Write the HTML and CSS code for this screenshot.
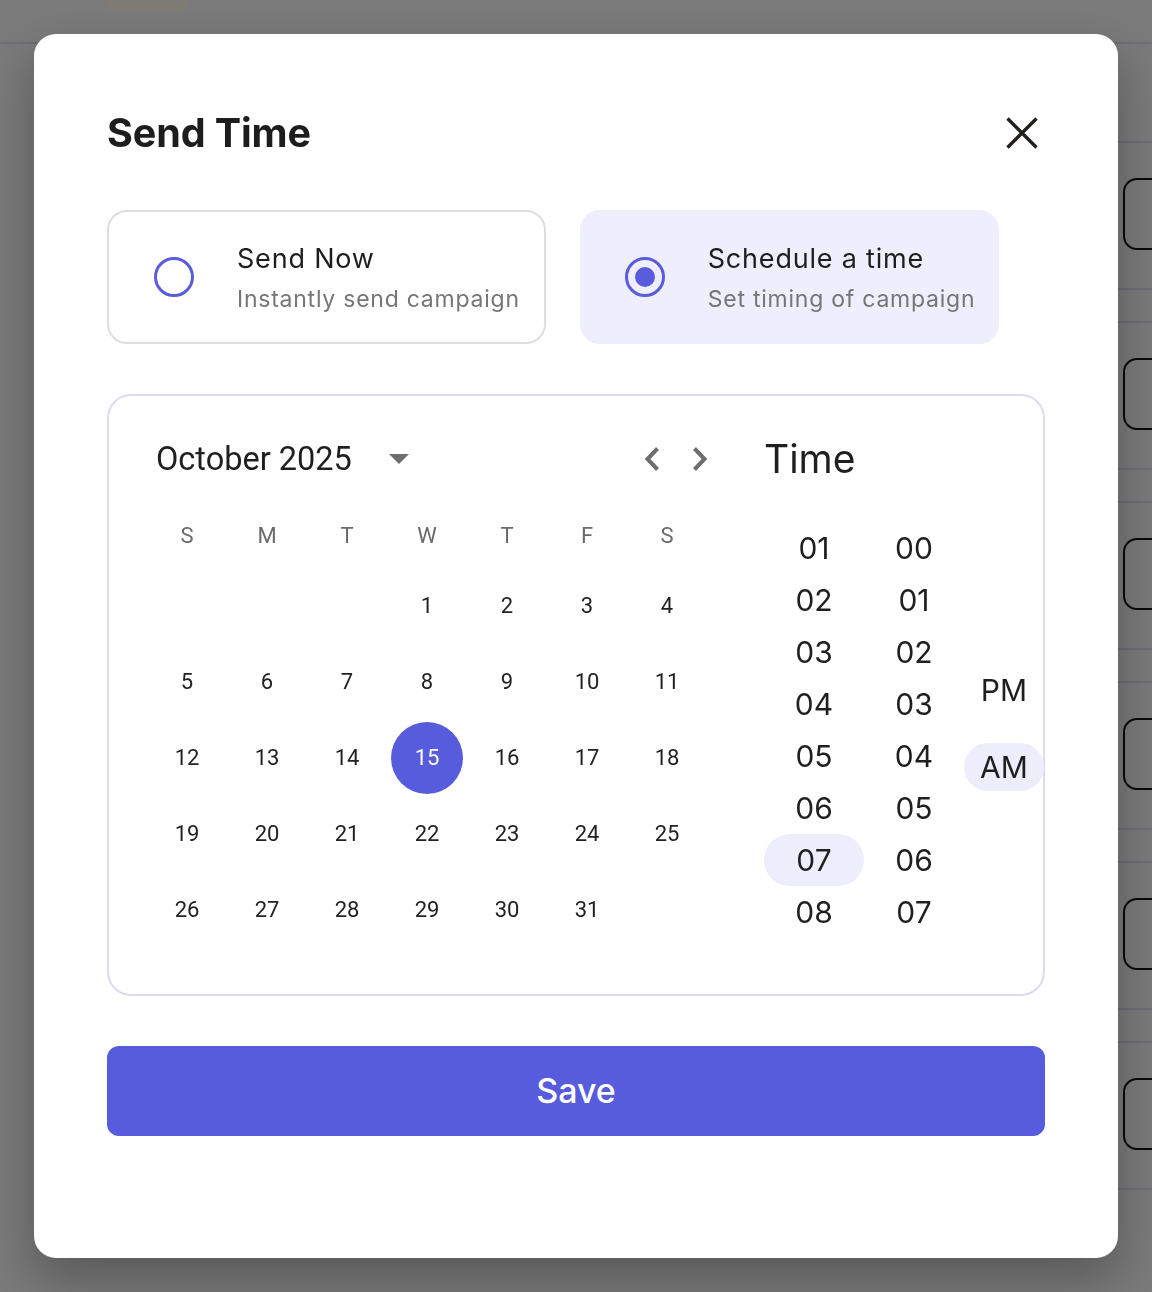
FILE: index.html
```html
<!DOCTYPE html>
<html lang="en">
<head>
<meta charset="utf-8">
<title>Send Time</title>
<link rel="stylesheet" href="styles.css">
</head>
<body>
<div class="page">
  <header class="topbar">
    <span class="topbar-pill"></span>
  </header>
  <main class="list">
    <div class="list-row"><div class="row-inner"><span class="row-box"></span></div></div>
    <div class="list-row"><div class="row-inner"><span class="row-box"></span></div></div>
    <div class="list-row"><div class="row-inner"><span class="row-box"></span></div></div>
    <div class="list-row"><div class="row-inner"><span class="row-box"></span></div></div>
    <div class="list-row"><div class="row-inner"><span class="row-box"></span></div></div>
    <div class="list-row"><div class="row-inner"><span class="row-box"></span></div></div>
  </main>
</div>

<div class="overlay">
  <section class="dialog" role="dialog" aria-label="Send Time">
    <div class="dialog-header">
      <h1 class="dialog-title">Send Time</h1>
      <button class="close-btn" aria-label="Close">
        <svg width="32" height="32" viewBox="0 0 32 32"><path d="M1.5 1.5 L30.5 30.5 M30.5 1.5 L1.5 30.5" stroke="#231f1c" stroke-width="3.4" fill="none" stroke-linecap="butt"/></svg>
      </button>
    </div>

    <div class="options">
      <label class="option">
        <span class="radio"></span>
        <span class="option-text">
          <span class="option-title">Send Now</span>
          <span class="option-sub">Instantly send campaign</span>
        </span>
      </label>
      <label class="option option-active">
        <span class="radio radio-checked"><span class="radio-dot"></span></span>
        <span class="option-text">
          <span class="option-title">Schedule a time</span>
          <span class="option-sub">Set timing of campaign</span>
        </span>
      </label>
    </div>

    <div class="picker">
      <div class="calendar">
        <div class="cal-header">
          <div class="cal-month">
            <span class="cal-month-label">October 2025</span>
            <svg class="cal-caret" width="20" height="10" viewBox="0 0 20 10"><path d="M0 0 H20 L10 10 Z" fill="#6e6e6e"/></svg>
          </div>
          <div class="cal-nav">
            <button class="nav-btn" aria-label="Previous month">
              <svg width="16" height="24" viewBox="0 0 16 24"><path d="M13.5 1.5 L3.5 12 L13.5 22.5" stroke="#6e6e6e" stroke-width="4" fill="none"/></svg>
            </button>
            <button class="nav-btn" aria-label="Next month">
              <svg width="16" height="24" viewBox="0 0 16 24"><path d="M2.5 1.5 L12.5 12 L2.5 22.5" stroke="#6e6e6e" stroke-width="4" fill="none"/></svg>
            </button>
          </div>
        </div>
        <div class="weekdays">
          <span>S</span><span>M</span><span>T</span><span>W</span><span>T</span><span>F</span><span>S</span>
        </div>
        <div class="days">
          <span></span><span></span><span></span>
          <span class="day">1</span><span class="day">2</span><span class="day">3</span><span class="day">4</span>
          <span class="day">5</span><span class="day">6</span><span class="day">7</span><span class="day">8</span><span class="day">9</span><span class="day">10</span><span class="day">11</span>
          <span class="day">12</span><span class="day">13</span><span class="day">14</span><span class="day"><span class="day-selected">15</span></span><span class="day">16</span><span class="day">17</span><span class="day">18</span>
          <span class="day">19</span><span class="day">20</span><span class="day">21</span><span class="day">22</span><span class="day">23</span><span class="day">24</span><span class="day">25</span>
          <span class="day">26</span><span class="day">27</span><span class="day">28</span><span class="day">29</span><span class="day">30</span><span class="day">31</span>
        </div>
      </div>

      <div class="time">
        <div class="time-title">Time</div>
        <div class="time-cols">
          <ul class="time-col">
            <li>01</li><li>02</li><li>03</li><li>04</li><li>05</li><li>06</li><li class="time-sel">07</li><li>08</li>
          </ul>
          <ul class="time-col">
            <li>00</li><li>01</li><li>02</li><li>03</li><li>04</li><li>05</li><li>06</li><li>07</li>
          </ul>
          <ul class="time-col ampm">
            <li>PM</li><li class="time-sel">AM</li>
          </ul>
        </div>
      </div>
    </div>

    <button class="save-btn">Save</button>
  </section>
</div>
</body>
</html>
```

FILE: styles.css
```css
* { box-sizing: border-box; }

html, body {
  margin: 0;
  padding: 0;
  width: 1152px;
  height: 1292px;
  overflow: hidden;
}

body {
  font-family: "Inter", "Noto Sans", sans-serif;
  background: #f4f4f4;
}

/* ---------- background page ---------- */
.page {
  width: 1152px;
  height: 1292px;
}

.topbar {
  height: 44px;
  border-bottom: 2px solid #dadae4;
  padding-left: 105px;
}

.topbar-pill {
  display: block;
  width: 85px;
  height: 12px;
  background: #fdf5e8;
  border-radius: 0 0 14px 14px;
}

.list {
  margin-top: 97px;
  margin-left: 60px;
  border-top: 2px solid #dadae4;
}

.list-row {
  height: 180px;
  border-bottom: 2px solid #dadae4;
}

.list-row:last-child {
  border-bottom: 0;
}

.row-inner {
  height: 147px;
  border-bottom: 2px solid #dadae4;
  padding-top: 35px;
  display: flex;
  justify-content: flex-end;
}

.row-box {
  display: block;
  width: 80px;
  height: 72px;
  margin-right: -51px;
  border: 2px solid #111;
  border-radius: 14px;
}

/* ---------- overlay / dialog ---------- */
.overlay {
  position: fixed;
  inset: 0;
  background: rgba(0, 0, 0, 0.5);
  display: flex;
  align-items: center;
  justify-content: center;
}

.dialog {
  width: 1084px;
  height: 1224px;
  margin-top: -1px;
  background: #fff;
  border-radius: 22px;
  padding: 75px 73px 0 73px;
  box-shadow: 0 22px 50px rgba(0, 0, 0, 0.28);
  display: flex;
  flex-direction: column;
}

.dialog-header {
  height: 48px;
  display: flex;
  align-items: center;
  justify-content: space-between;
}

.dialog-title {
  margin: 0;
  font-size: 39.5px;
  font-weight: 700;
  color: #1d1d1d;
  letter-spacing: -0.1px;
}

.close-btn {
  width: 48px;
  height: 48px;
  margin-right: -1px;
  border: 0;
  padding: 0;
  background: transparent;
  display: flex;
  align-items: center;
  justify-content: center;
}

/* ---------- options ---------- */
.options {
  margin-top: 53px;
  display: flex;
  gap: 34px;
}

.option {
  height: 134px;
  display: flex;
  align-items: center;
  gap: 43px;
  padding: 0 24px 0 45px;
  border: 2px solid #dedede;
  border-radius: 20px;
}

.option-active {
  background: #eeeefc;
  border-color: #eeeefc;
  padding: 0 22px 0 43px;
}

.radio {
  width: 40px;
  height: 40px;
  border: 3px solid #5a5cdb;
  border-radius: 50%;
  display: flex;
  align-items: center;
  justify-content: center;
  flex-shrink: 0;
}

.radio-dot {
  width: 20px;
  height: 20px;
  border-radius: 50%;
  background: #5a5cdb;
}

.option-text {
  display: flex;
  flex-direction: column;
  padding-top: 4px;
}

.option-title {
  font-size: 27px;
  line-height: 38px;
  color: #1e1e1e;
  letter-spacing: 0.8px;
}

.option-sub {
  font-size: 23px;
  line-height: 38px;
  margin-top: 2px;
  color: #767676;
  letter-spacing: 0.76px;
}

/* ---------- picker ---------- */
.picker {
  margin-top: 50px;
  height: 602px;
  border: 2px solid #dddcee;
  border-radius: 24px;
  padding: 38px 0 0 38px;
  display: flex;
}

.calendar {
  width: 560px;
  font-family: "Roboto", "Liberation Sans", sans-serif;
}

.cal-header {
  height: 50px;
  display: flex;
  align-items: center;
  justify-content: space-between;
  padding-left: 9px;
}

.cal-month {
  display: flex;
  align-items: center;
  gap: 37px;
}

.cal-month-label {
  font-size: 32.5px;
  color: #1f1f1f;
}

.cal-caret {
  margin-top: 1px;
}

.cal-nav {
  display: flex;
  gap: 32px;
  margin-right: -1px;
}

.nav-btn {
  width: 16px;
  height: 24px;
  border: 0;
  padding: 0;
  background: transparent;
  display: flex;
}

.weekdays {
  margin-top: 20px;
  height: 64px;
  display: grid;
  grid-template-columns: repeat(7, 80px);
  align-items: center;
  justify-items: center;
  font-size: 22px;
  color: #6a6a6a;
}

.days {
  display: grid;
  grid-template-columns: repeat(7, 80px);
  grid-auto-rows: 76px;
  font-size: 22px;
  color: #222;
}

.day {
  display: flex;
  align-items: center;
  justify-content: center;
}

.day-selected {
  width: 72px;
  height: 72px;
  border-radius: 50%;
  background: #575cdc;
  color: #fff;
  display: flex;
  align-items: center;
  justify-content: center;
}

/* ---------- time ---------- */
.time {
  margin-left: 57px;
  display: flex;
  flex-direction: column;
}

.time-title {
  height: 50px;
  line-height: 50px;
  font-size: 39px;
  color: #1f1f1f;
}

.time-cols {
  margin-top: 38px;
  height: 402px;
  display: flex;
  overflow: hidden;
}

.time-col {
  list-style: none;
  margin: 0;
  padding: 0;
  width: 100px;
}

.time-col li {
  height: 52px;
  display: flex;
  align-items: center;
  justify-content: center;
  font-size: 30px;
  color: #1f1f1f;
  border-radius: 26px;
}

.time-sel {
  background: #ededfb;
}

.ampm {
  width: 80px;
  padding-top: 144px;
  display: flex;
  flex-direction: column;
  gap: 29px;
}

.ampm li {
  height: 48px;
  border-radius: 24px;
}

/* ---------- save ---------- */
.save-btn {
  margin-top: 50px;
  height: 90px;
  width: 100%;
  border: 0;
  border-radius: 12px;
  background: #575cdc;
  color: #fff;
  font-family: "Inter", "Noto Sans", sans-serif;
  font-size: 34px;
  font-weight: 500;
}
```
